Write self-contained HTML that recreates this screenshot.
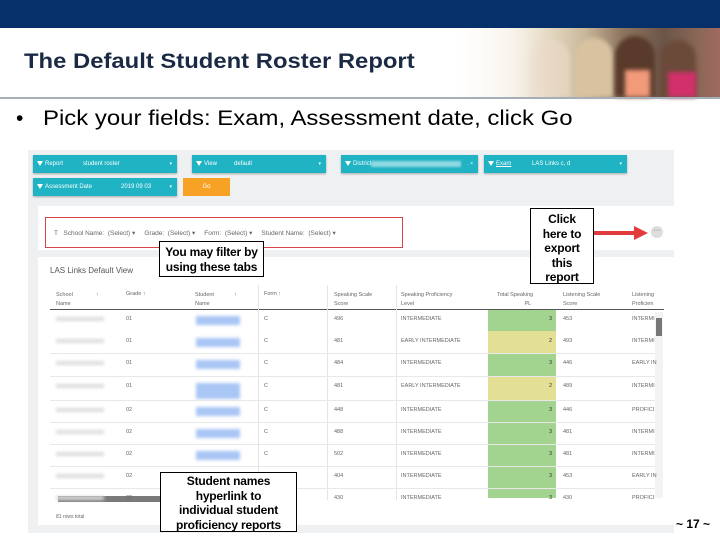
<!DOCTYPE html>
<html><head><meta charset="utf-8"><style>
*{margin:0;padding:0;box-sizing:border-box}
body{width:720px;height:540px;position:relative;overflow:hidden;background:#fff;font-family:"Liberation Sans",sans-serif}
.a{position:absolute}
.f{position:absolute;height:18px;background:#1fb3c3;color:#fff;font-size:6px;line-height:18px;padding-left:12px;box-shadow:0 1px 2px rgba(0,0,0,.3)}
.f:before{content:"";position:absolute;left:4px;top:6px;border-left:3px solid transparent;border-right:3px solid transparent;border-top:5px solid #fff}
.f b{position:absolute;font-weight:normal}
.f i{position:absolute;right:5px;font-style:normal;font-size:5px}
.t{position:absolute;font-size:5.5px;color:#666;white-space:nowrap}
.bl{position:absolute;background:#ddd;filter:blur(1.5px)}
.lk{position:absolute;background:#a9c6f5;filter:blur(1.5px)}
.co{position:absolute;background:#fff;border:1px solid #000;font-weight:bold;font-size:12px;text-align:center;line-height:14.5px;color:#000;letter-spacing:-0.2px}
</style></head><body>
<div class="a" style="left:0;top:0;width:720px;height:28px;background:#06306a"></div>
<div class="a" style="left:440px;top:28px;width:280px;height:69px;background:linear-gradient(90deg,#fff 0%,#f5efe2 25%,#e2d6bf 40%,#c9b79a 52%,#8d7560 65%,#6b5548 80%,#8a6756 92%,#a06a60 100%)"></div>
<div class="a" style="left:530px;top:40px;width:40px;height:57px;background:#ead9c6;border-radius:18px 18px 0 0;opacity:.7;filter:blur(2px)"></div>
<div class="a" style="left:575px;top:38px;width:38px;height:59px;background:#d8c2a0;border-radius:18px 18px 0 0;filter:blur(2px)"></div>
<div class="a" style="left:615px;top:36px;width:40px;height:61px;background:#5a3a2a;border-radius:20px 20px 0 0;filter:blur(2px)"></div>
<div class="a" style="left:625px;top:70px;width:25px;height:27px;background:#f29a7a;filter:blur(2px)"></div>
<div class="a" style="left:660px;top:40px;width:36px;height:57px;background:#6b4a3a;border-radius:18px 18px 0 0;filter:blur(2px)"></div>
<div class="a" style="left:668px;top:72px;width:28px;height:25px;background:#d2306a;filter:blur(2px)"></div>
<div class="a" style="left:440px;top:28px;width:110px;height:69px;background:linear-gradient(90deg,#fff,rgba(255,255,255,0))"></div>
<div class="a" style="left:0;top:97px;width:720px;height:2px;background:#a6afb8"></div>
<div class="a" style="left:24px;top:50px;font-size:21px;font-weight:bold;color:#1b2a44;white-space:nowrap;transform:scaleX(1.135);transform-origin:0 0">The Default Student Roster Report</div>
<div class="a" style="left:16px;top:107px;font-size:21px;color:#000">•</div>
<div class="a" style="left:43px;top:107px;font-size:21px;color:#000;white-space:nowrap;transform:scaleX(1.14);transform-origin:0 0">Pick your fields: Exam, Assessment date, click Go</div>

<div class="a" style="left:28px;top:150px;width:646px;height:383px;background:#eef0f2"></div>
<div class="f" style="left:33px;top:155px;width:144px">Report<b style="left:50px">student roster</b><i>▾</i></div>
<div class="f" style="left:192px;top:155px;width:134px">View<b style="left:42px">default</b><i>▾</i></div>
<div class="f" style="left:341px;top:155px;width:137px">District<b style="left:30px;top:6px;width:90px;height:6px;background:#8fd8e2;filter:blur(1px)"></b><i>. ×</i></div>
<div class="f" style="left:484px;top:155px;width:143px"><u>Exam</u><b style="left:48px">LAS Links c, d</b><i>▾</i></div>
<div class="f" style="left:33px;top:178px;width:144px">Assessment Date<b style="left:88px">2019 09 03</b><i>▾</i></div>
<div class="a" style="left:183px;top:178px;width:47px;height:18px;background:#f7a125;color:#fff;font-size:6px;text-align:center;line-height:18px">Go</div>

<div class="a" style="left:38px;top:206px;width:636px;height:319px;background:#fff"></div>
<div class="a" style="left:38px;top:250px;width:636px;height:7px;background:#eef0f2"></div>
<div class="a" style="left:45px;top:217px;width:358px;height:31px;border:1.5px solid #d9434a"></div>
<div class="t" style="left:54px;top:229px;font-size:6.5px">T&nbsp;&nbsp; School Name:&nbsp; (Select) ▾&nbsp;&nbsp;&nbsp;&nbsp; Grade:&nbsp; (Select) ▾&nbsp;&nbsp;&nbsp;&nbsp; Form:&nbsp; (Select) ▾&nbsp;&nbsp;&nbsp;&nbsp; Student Name:&nbsp; (Select) ▾</div>
<div class="t" style="left:50px;top:266px;font-size:8px;color:#555">LAS Links Default View</div>
<svg class="a" style="left:594px;top:224px" width="56" height="18"><path d="M0 7h40v-5l14 7-14 7v-5H0z" fill="#e23b3b"/></svg>
<div class="a" style="left:651px;top:226px;width:12px;height:12px;border-radius:6px;background:#ddd;font-size:7px;text-align:center;line-height:9px;color:#555">···</div>

<div class="a" style="left:50px;top:309px;width:614px;height:1px;background:#555"></div>
<div class="t" style="left:56px;top:291px;line-height:9px">School<br>Name</div><div class="t" style="left:96px;top:292px">↑</div>
<div class="t" style="left:126px;top:291px">Grade ↑</div>
<div class="t" style="left:195px;top:291px;line-height:9px">Student<br>Name</div><div class="t" style="left:234px;top:292px">↑</div>
<div class="t" style="left:264px;top:291px">Form ↑</div>
<div class="t" style="left:334px;top:291px;line-height:9px">Speaking Scale<br>Score</div>
<div class="t" style="left:401px;top:291px;line-height:9px">Speaking Proficiency<br>Level</div>
<div class="t" style="left:497px;top:291px;line-height:9px">Total Speaking<br>&nbsp;&nbsp;&nbsp;&nbsp;&nbsp;&nbsp;&nbsp;&nbsp;&nbsp;&nbsp;&nbsp;&nbsp;&nbsp;&nbsp;&nbsp;&nbsp;&nbsp;&nbsp;PL</div>
<div class="t" style="left:563px;top:291px;line-height:9px">Listening Scale<br>Score</div>
<div class="t" style="left:632px;top:291px;line-height:9px">Listening<br>Proficien</div>
<div class="a" style="left:258px;top:285px;width:1px;height:215px;background:#e4e4e4"></div>
<div class="a" style="left:327px;top:285px;width:1px;height:215px;background:#e4e4e4"></div>
<div class="a" style="left:396px;top:285px;width:1px;height:215px;background:#e4e4e4"></div>
<div class="a" style="left:488px;top:310px;width:68px;height:188px;background:#a3d48f"></div>
<div class="a" style="left:488px;top:331px;width:68px;height:22px;background:#e3e096"></div>
<div class="a" style="left:488px;top:376px;width:68px;height:24px;background:#e3e096"></div>
<div class="a" style="left:655px;top:312px;width:8px;height:186px;background:#f3f3f3"></div>
<div class="a" style="left:656px;top:318px;width:6px;height:18px;background:#777"></div>
<div class="a" style="left:58px;top:496px;width:102px;height:6px;background:#7a7a7a"></div>

<div id="rows"></div>
<script>
var tops=[309,331,353,376,400,422,444,466,488];
var g=["01","01","01","01","02","02","02","02","02"];
var s=["496","481","484","481","448","488","502","404","430"];
var l=["INTERMEDIATE","EARLY INTERMEDIATE","INTERMEDIATE","EARLY INTERMEDIATE","INTERMEDIATE","INTERMEDIATE","INTERMEDIATE","INTERMEDIATE","INTERMEDIATE"];
var p=["3","2","3","2","3","3","3","3","3"];
var ls=["453","493","446","489","446","481","481","453","430"];
var lp=["INTERMI","INTERMI","EARLY IN","INTERMI","PROFICI","INTERMI","INTERMI","EARLY IN","PROFICI"];
var h="";
for(var i=0;i<9;i++){var y=tops[i]+7;
if(i>1)h+='<div class="a" style="left:50px;top:'+tops[i]+'px;width:605px;height:1px;background:#e8e8e8"></div>';
h+='<div class="bl" style="left:56px;top:'+(y+1)+'px;width:48px;height:4px"></div>';
h+='<div class="t" style="left:126px;top:'+y+'px">'+g[i]+'</div>';
if(i<7)h+='<div class="lk" style="left:196px;top:'+y+'px;width:44px;height:'+(i==3?16:9)+'px"></div>';
h+='<div class="t" style="left:264px;top:'+y+'px">C</div>';
h+='<div class="t" style="left:334px;top:'+y+'px">'+s[i]+'</div>';
h+='<div class="t" style="left:401px;top:'+y+'px">'+l[i]+'</div>';
h+='<div class="t" style="left:549px;top:'+y+'px;color:#333">'+p[i]+'</div>';
h+='<div class="t" style="left:563px;top:'+y+'px">'+ls[i]+'</div>';
h+='<div class="t" style="left:632px;top:'+y+'px">'+lp[i]+'</div>';}
document.getElementById("rows").innerHTML=h;
</script>
<div class="t" style="left:56px;top:514px;font-size:5px">81 rows total</div>

<div class="co" style="left:159px;top:241px;width:105px;height:36px;padding-top:3px">You may filter by<br>using these tabs</div>
<div class="co" style="left:530px;top:208px;width:64px;height:76px;padding-top:3px">Click<br>here to<br>export<br>this<br>report</div>
<div class="co" style="left:160px;top:472px;width:137px;height:60px;padding-top:1px">Student names<br>hyperlink to<br>individual student<br>proficiency reports</div>
<div class="a" style="left:676px;top:517px;font-size:12px;font-weight:bold">~ 17 ~</div>
</body></html>
